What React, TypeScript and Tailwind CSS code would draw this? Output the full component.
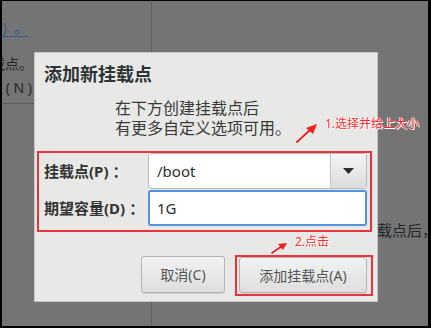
import React from "react";

const font = "font-['Noto_Sans','Noto_Sans_CJK_SC',sans-serif]";

export default function App() {
  return (
    <div className={`relative w-[431px] h-[328px] overflow-hidden bg-black ${font}`}>
      <div className="absolute inset-0 border-t-[1px] border-l-[2px] border-r-[3px] border-b-[2px] border-black">
        {/* background page (dimmed) */}
        <div className="flex h-full bg-[#747474] overflow-hidden">
          <div className="w-[150px] shrink-0 border-r border-[#5e5e5e] flex flex-col">
            <div className="h-[103px] border-b border-[#5e5e5e] flex flex-col">
              <div className="mt-[17px] h-[20px] w-[26px] overflow-hidden flex justify-end whitespace-nowrap text-[14px] leading-[20px] text-[#35598f] underline underline-offset-[3px]">
                )&nbsp;&nbsp;。
              </div>
              <div className="mt-[16px] h-[20px] w-[31px] overflow-hidden flex justify-end whitespace-nowrap text-[14px] leading-[20px] text-[#262626]">
                载点。
              </div>
              <div className="mt-[4px] h-[20px] w-[30px] overflow-hidden flex justify-end whitespace-nowrap text-[14px] leading-[20px] text-[#262626]">
                (&nbsp;N&nbsp;)
              </div>
            </div>
          </div>
          <div className="flex-1 flex flex-col overflow-hidden">
            <div className="mt-[219px] pl-[225px] whitespace-nowrap text-[15px] leading-[20px] text-[#262626]">
              载点后，
            </div>
          </div>
        </div>
      </div>

      {/* dialog */}
      <div className="absolute left-[35px] top-[53px] w-[342px] h-[248px] bg-[#e8e8e7] shadow-[0_0_0_1px_#c4c4c4] flex flex-col">
        <div className="pt-[9px] pl-[9px] text-[18px] leading-[24px] font-bold text-[#2e3436]">添加新挂载点</div>
        <div className="mt-[12px] pl-[80px] text-[16px] leading-[20px] text-[#3a3a3a]">
          <div>在下方创建挂载点后</div>
          <div>有更多自定义选项可用。</div>
        </div>
        <div className="mt-[13px] ml-[2px] w-[335px] h-[81px] border-2 border-[#e8333b] grid grid-cols-[109px_1fr] grid-rows-[36px_36px] gap-y-[1px] pr-[3px]">
          <div className="pl-[5px] flex items-center text-[15px] font-bold text-[#333]">
            挂载点(P)<span className="ml-[4px]">：</span>
          </div>
          <div className="flex border border-[#b9b9b9] rounded-[3px] bg-white overflow-hidden">
            <div className="flex-1 pl-[8px] flex items-center text-[15px] text-[#2e2e2e]">/boot</div>
            <div className="w-[36px] border-l border-[#c4c4c4] bg-gradient-to-b from-[#f4f4f4] to-[#dcdcdc] flex items-center justify-center">
              <svg width="11" height="6" viewBox="0 0 11 6">
                <path d="M0 0 L11 0 L5.5 6 Z" fill="#2a2a2a" />
              </svg>
            </div>
          </div>
          <div className="pl-[5px] flex items-center text-[15px] font-bold text-[#333]">
            期望容量(D)<span className="ml-[4px]">：</span>
          </div>
          <div className="flex items-center border-2 border-[#5294e2] rounded-[3px] bg-white pl-[7px] text-[15px] text-[#2e2e2e]">1G</div>
        </div>
        <div className="mt-[23px] flex justify-end items-start pr-[4px]">
          <button className="mt-[1px] mr-[10px] w-[84px] h-[37px] rounded-[3px] border border-[#b4b4b4] bg-gradient-to-b from-[#f2f2f2] to-[#dedede] text-[14px] text-[#555] shadow-[0_1px_0_#d0d0d0]">
            取消(C)
          </button>
          <div className="w-[138px] h-[41px] border-2 border-[#e8333b] pl-[2px]">
            <button className="w-[128px] h-[36px] rounded-[3px] border border-[#b4b4b4] bg-gradient-to-b from-[#f2f2f2] to-[#dedede] text-[14px] text-[#555] shadow-[0_1px_0_#d0d0d0]">
              添加挂载点(A)
            </button>
          </div>
        </div>
      </div>

      {/* annotations */}
      <svg className="absolute inset-0 pointer-events-none" width="431" height="328" viewBox="0 0 431 328">
        <g stroke="#ffffff" strokeWidth="4" strokeLinecap="round" opacity="0.7">
          <line x1="297" y1="142" x2="311" y2="129" />
          <line x1="272" y1="253" x2="282" y2="246" />
        </g>
        <g stroke="#ee2020" strokeWidth="2" strokeLinecap="round">
          <line x1="297" y1="142" x2="311" y2="129" />
          <line x1="272" y1="253" x2="282" y2="246" />
        </g>
        <path d="M317 124 L306 128 L313 134 Z" fill="#ee2020" />
        <path d="M287 243 L278 244 L283 250 Z" fill="#ee2020" />
      </svg>
      <div className="absolute left-[325px] top-[115px] text-[12px] leading-[18px] whitespace-nowrap text-[#ff2a2a] [text-shadow:0_0_1px_#fff,1px_1px_0_#fff,-1px_0_0_#fff]">
        1.选择并给上大小
      </div>
      <div className="absolute left-[295px] top-[233px] text-[12px] leading-[18px] whitespace-nowrap text-[#ff2a2a] [text-shadow:0_0_1px_#fff,1px_1px_0_#fff,-1px_0_0_#fff]">
        2.点击
      </div>
    </div>
  );
}
